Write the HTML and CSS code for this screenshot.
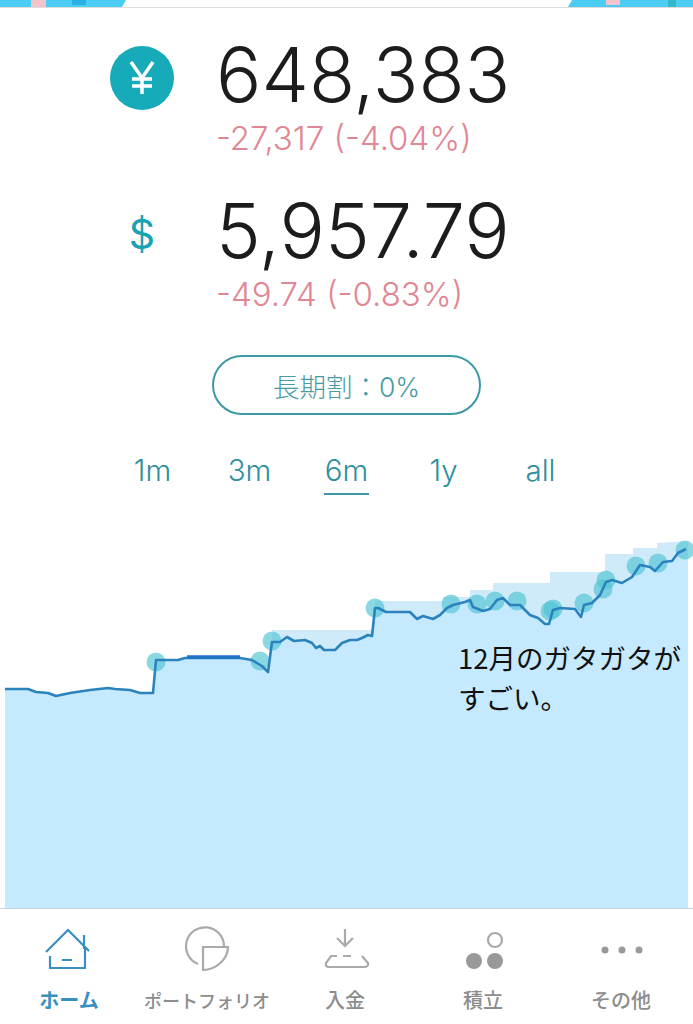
FILE: index.html
```html
<!DOCTYPE html>
<html lang="ja">
<head>
  <meta charset="UTF-8" />
  <meta name="viewport" content="width=device-width, initial-scale=1.0" />
  <title>ホーム</title>
  <link rel="stylesheet" href="styles.css">
</head>
<body>
  <div class="top-strip">
    <svg class="strip-art" width="693" height="7" viewBox="0 0 693 7">
      <polygon class="sky" points="0,0 126,0 122,7 0,7" />
      <rect class="pink" x="31" y="0" width="15" height="7" />
      <rect class="deep" x="72" y="0" width="14" height="5" />
      <polygon class="sky" points="572,0 693,0 693,7 568,7" />
      <rect class="pink" x="606" y="0" width="14" height="5" />
      <rect class="teal" x="668" y="0" width="8" height="7" />
    </svg>
  </div>

  <div class="balances">
    <div class="balance">
      <div class="cur-icon">
        <div class="yen-badge">
          <svg width="30" height="36" viewBox="0 0 30 36">
            <path d="M4 2 L15 18 L26 2 M15 18 V34 M5 19 H25 M5 26 H25" />
          </svg>
        </div>
      </div>
      <div class="amounts">
        <div class="amount">648,383</div>
        <div class="change">-27,317 (-4.04%)</div>
      </div>
    </div>
    <div class="balance usd">
      <div class="cur-icon"><span class="dollar">$</span></div>
      <div class="amounts">
        <div class="amount">5,957.79</div>
        <div class="change">-49.74 (-0.83%)</div>
      </div>
    </div>
  </div>

  <div class="pill-row">
    <button class="pill">長期割：0%</button>
  </div>

  <div class="ranges">
    <div class="range">1m</div>
    <div class="range">3m</div>
    <div class="range active">6m</div>
    <div class="range">1y</div>
    <div class="range">all</div>
  </div>

  <div class="chart">
    <svg width="693" height="388" viewBox="0 520 693 388">
      <polygon class="peak-area" points="272,630 375,630 375,601 443,601 443,597 470,597 470,590 493,590 493,583 550,583 550,572 605,572 605,554 633,554 633,548 657,548 657,543 688,541 688,908 272,908" />
      <polygon class="value-area" points="5,689 28,689 36,692 48,693 56,696 70,693 90,690 108,688 115,689 130,690 140,693 153,693 156,660 165,660 178,660 185,658 240,658 252,660 262,666 268,672 272,642 280,642 287,637 294,641 305,640 312,643 316,648 320,646 324,650 335,650 342,643 350,640 357,640 362,638 368,635 372,636 375,608 378,608 386,612 410,612 417,619 423,616 433,619 440,615 447,608 453,605 465,602 470,600 473,607 483,611 490,609 497,600 503,598 510,605 520,605 530,615 538,618 545,624 549,624 553,610 560,608 575,609 581,617 584,605 592,603 600,595 606,582 612,580 622,583 632,577 640,565 650,567 655,571 663,562 672,561 678,553 686,549 688,549 688,908 5,908" />
      <g class="markers">
        <circle cx="156" cy="662" r="9.5" />
        <circle cx="260" cy="661" r="9.5" />
        <circle cx="272" cy="641" r="9.5" />
        <circle cx="375" cy="608" r="9.5" />
        <circle cx="451" cy="604" r="9.5" />
        <circle cx="477" cy="604" r="9.5" />
        <circle cx="495" cy="601" r="9.5" />
        <circle cx="517" cy="601" r="9.5" />
        <circle cx="550" cy="611" r="9.5" />
        <circle cx="553" cy="609" r="9.5" />
        <circle cx="584" cy="603" r="9.5" />
        <circle cx="603" cy="589" r="9.5" />
        <circle cx="606" cy="580" r="9.5" />
        <circle cx="636" cy="566" r="9.5" />
        <circle cx="658" cy="563" r="9.5" />
        <circle cx="685" cy="550" r="9.5" />
      </g>
      <polyline class="value-line" points="5,689 28,689 36,692 48,693 56,696 70,693 90,690 108,688 115,689 130,690 140,693 153,693 156,660 165,660 178,660 185,658 240,658 252,660 262,666 268,672 272,642 280,642 287,637 294,641 305,640 312,643 316,648 320,646 324,650 335,650 342,643 350,640 357,640 362,638 368,635 372,636 375,608 378,608 386,612 410,612 417,619 423,616 433,619 440,615 447,608 453,605 465,602 470,600 473,607 483,611 490,609 497,600 503,598 510,605 520,605 530,615 538,618 545,624 549,624 553,610 560,608 575,609 581,617 584,605 592,603 600,595 606,582 612,580 622,583 632,577 640,565 650,567 655,571 663,562 672,561 678,553 686,549" />
      <polyline class="value-thick" points="187,657 240,657" />
    </svg>
    <div class="note">12月のガタガタが<br>すごい。</div>
  </div>

  <nav class="tabbar">
    <div class="tab active">
      <svg width="60" height="50" viewBox="0 0 60 50">
        <path d="M7 27 L29 5 L50 26 M45 10 V24 M11 31 V43 H46 V24 M23 35 H33" />
      </svg>
      <span>ホーム</span>
    </div>
    <div class="tab long">
      <svg width="60" height="50" viewBox="0 0 60 50">
        <path d="M21 39 A19 19 0 1 1 47 21" />
        <path d="M26 22 H51 C51 34 39 45 26 45 Z" />
      </svg>
      <span>ポートフォリオ</span>
    </div>
    <div class="tab">
      <svg width="60" height="50" viewBox="0 0 60 50">
        <path d="M30 4 V21 M22 13 L30 21 L38 13 M22 31 H16 L11 38 Q10 42 14 42 H49 Q54 42 53 38 L47 31 M28 31 H36" />
      </svg>
      <span>入金</span>
    </div>
    <div class="tab">
      <svg width="60" height="50" viewBox="0 0 60 50">
        <circle cx="42" cy="15" r="7" />
        <circle class="solid" cx="21" cy="36" r="8" />
        <circle class="solid" cx="42" cy="36" r="8" />
      </svg>
      <span>積立</span>
    </div>
    <div class="tab">
      <svg width="60" height="50" viewBox="0 0 60 50">
        <circle class="solid" cx="14" cy="25" r="3.5" />
        <circle class="solid" cx="31" cy="25" r="3.5" />
        <circle class="solid" cx="48" cy="25" r="3.5" />
      </svg>
      <span>その他</span>
    </div>
  </nav>
</body>
</html>
```

FILE: styles.css
```css
* { box-sizing: border-box; }
body {
  margin: 0;
  width: 693px;
  height: 1024px;
  overflow: hidden;
  background: #fff;
  font-family: Inter, "Noto Sans CJK JP", sans-serif;
  color: #222;
}
.top-strip {
  height: 8px;
  border-bottom: 1px solid #ddd;
}
.strip-art { display: block; }
.sky { fill: #4ccdf3; }
.pink { fill: #f3c4cb; }
.deep { fill: #2bb0e6; }
.teal { fill: #35b7c9; }

.balances {
  padding: 29px 0 0 110px;
}
.balance {
  display: flex;
  gap: 42px;
  height: 156px;
}
.cur-icon {
  width: 64px;
  padding-top: 9px;
  display: flex;
  justify-content: center;
  align-items: flex-start;
}
.yen-badge {
  width: 64px;
  height: 64px;
  border-radius: 50%;
  background: #17aab8;
  display: flex;
  align-items: center;
  justify-content: center;
}
.yen-badge svg path {
  fill: none;
  stroke: #fff;
  stroke-width: 3.5;
}
.dollar {
  font-size: 41px;
  line-height: 64px;
  color: #17a3b2;
  font-weight: 400;
}
.amount {
  font-size: 75.5px;
  line-height: 76px;
  font-weight: 300;
  color: #1c1c1c;
}
.change {
  margin-top: 5px;
  font-size: 33px;
  line-height: 40px;
  font-weight: 300;
  color: #df8794;
}

.pill-row {
  display: flex;
  justify-content: center;
  padding-top: 6px;
}
.pill {
  width: 269px;
  height: 60px;
  border: 2px solid #3d98a5;
  border-radius: 30px;
  background: #fff;
  font-family: inherit;
  font-size: 26.5px;
  font-weight: 300;
  color: #4a9aa6;
}

.ranges {
  display: flex;
  justify-content: center;
  margin-top: 33px;
}
.range {
  width: 97px;
  text-align: center;
  font-size: 29.5px;
  line-height: 44px;
  font-weight: 300;
  color: #2e8f9c;
}
.range.active::after {
  content: "";
  display: block;
  width: 45px;
  height: 2px;
  margin: 1px auto 0;
  background: #3d98a5;
}

.chart {
  position: absolute;
  left: 0;
  top: 520px;
  width: 693px;
  height: 388px;
}
.chart svg { display: block; }
.peak-area { fill: #cfebf9; }
.value-area { fill: #c5e9fe; }
.markers circle { fill: #4fc3d3; opacity: 0.65; }
.value-line {
  fill: none;
  stroke: #2a83bd;
  stroke-width: 2.6;
  stroke-linejoin: round;
}
.value-thick {
  fill: none;
  stroke: #1f74c4;
  stroke-width: 3.5;
}
.note {
  position: absolute;
  left: 458px;
  top: 117px;
  font-family: "Noto Sans CJK JP", sans-serif;
  font-size: 27.5px;
  line-height: 40px;
  color: #111;
}

.tabbar {
  position: absolute;
  left: 0;
  top: 908px;
  width: 693px;
  height: 116px;
  padding-right: 3px;
  display: grid;
  grid-template-columns: repeat(5, 1fr);
  border-top: 1px solid #c9d5dc;
  background: #fff;
}
.tab {
  display: flex;
  flex-direction: column;
  align-items: center;
  padding-top: 16px;
  color: #8d8d8d;
  font-family: "Noto Sans CJK JP", sans-serif;
  font-size: 20px;
  line-height: 30px;
  font-weight: 500;
  white-space: nowrap;
}
.tab.long { font-size: 18px; }
.tab svg { display: block; margin-bottom: 10px; }
.tab svg path, .tab svg circle {
  fill: none;
  stroke: #aaa;
  stroke-width: 2.2;
}
.tab svg circle.solid {
  fill: #999;
  stroke: none;
}
.tab.active { color: #3a8fc0; font-weight: 700; }
.tab.active svg path { stroke: #3a8fc0; }
```
